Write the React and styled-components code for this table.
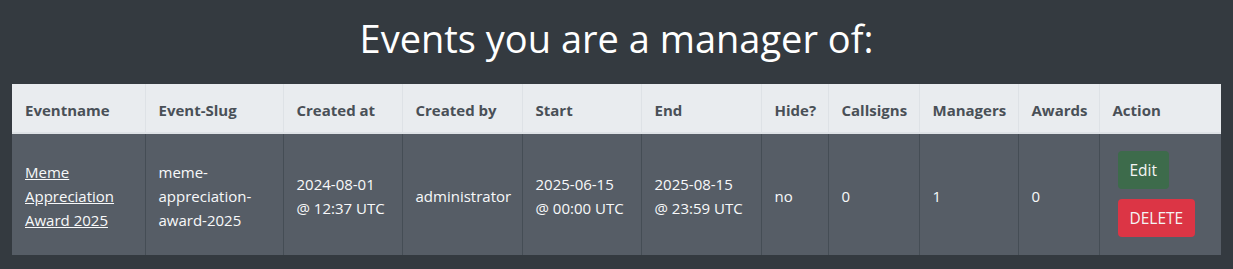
import React from "react";
import styled, { createGlobalStyle } from "styled-components";

const GlobalStyle = createGlobalStyle`
  html, body {
    margin: 0;
    padding: 0;
    background: #343a40;
  }
  body {
    font-family: "Open Sans", "Noto Sans", sans-serif;
    color: #f8f9fa;
    font-size: 15px;
    line-height: 24px;
  }
`;

const Page = styled.div`
  padding: 14px 12px 14px;
`;

const Title = styled.h1`
  margin: 0 0 22px;
  text-align: center;
  font-size: 38px;
  font-weight: 400;
  line-height: 48px;
  color: #ffffff;
`;

const Table = styled.table`
  width: 100%;
  border-collapse: collapse;
  table-layout: fixed;
`;

const HeadCell = styled.th`
  box-sizing: border-box;
  width: ${(p) => p.$w}px;
  background: #e9ecef;
  color: #495057;
  font-weight: 700;
  text-align: left;
  padding: 14px 12px 10px 13px;
  border-left: 1px solid #dee2e6;
  border-bottom: 2px solid #dee2e6;
  vertical-align: middle;
  &:first-child {
    border-left: none;
  }
`;

const Cell = styled.td`
  box-sizing: border-box;
  background: #565d66;
  color: #f8f9fa;
  padding: 14px 12px 11px 13px;
  border-left: 1px solid #454d55;
  vertical-align: middle;
  &:first-child {
    border-left: none;
  }
`;

const EventLink = styled.a`
  color: #f8f9fa;
  text-decoration: underline;
`;

const Actions = styled.div`
  display: flex;
  flex-direction: column;
  align-items: flex-start;
  gap: 10px;
  padding: 3px 0 7px 5px;
`;

const Button = styled.button`
  box-sizing: border-box;
  height: 38px;
  font-family: inherit;
  font-size: 15.5px;
  line-height: 24px;
  padding: 7px 12px;
  border: none;
  border-radius: 4px;
  color: #f4f4f4;
  background: ${(p) => (p.$variant === "danger" ? "#dc3545" : "#3d6b4b")};
  cursor: pointer;
`;

const columns = [
  ["Eventname", 133],
  ["Event-Slug", 138],
  ["Created at", 119],
  ["Created by", 120],
  ["Start", 119],
  ["End", 120],
  ["Hide?", 67],
  ["Callsigns", 91],
  ["Managers", 99],
  ["Awards", 81],
  ["Action", 122],
];

export default function App() {
  return (
    <>
      <GlobalStyle />
      <Page>
        <Title>Events you are a manager of:</Title>
        <Table>
          <thead>
            <tr>
              {columns.map(([label, w]) => (
                <HeadCell key={label} $w={w}>
                  {label}
                </HeadCell>
              ))}
            </tr>
          </thead>
          <tbody>
            <tr>
              <Cell>
                <EventLink href="#">Meme Appreciation Award 2025</EventLink>
              </Cell>
              <Cell>meme-appreciation-award-2025</Cell>
              <Cell>
                2024-08-01
                <br />@ 12:37 UTC
              </Cell>
              <Cell>administrator</Cell>
              <Cell>
                2025-06-15
                <br />@ 00:00 UTC
              </Cell>
              <Cell>
                2025-08-15
                <br />@ 23:59 UTC
              </Cell>
              <Cell>no</Cell>
              <Cell>0</Cell>
              <Cell>1</Cell>
              <Cell>0</Cell>
              <Cell>
                <Actions>
                  <Button type="button">Edit</Button>
                  <Button type="button" $variant="danger">
                    DELETE
                  </Button>
                </Actions>
              </Cell>
            </tr>
          </tbody>
        </Table>
      </Page>
    </>
  );
}
